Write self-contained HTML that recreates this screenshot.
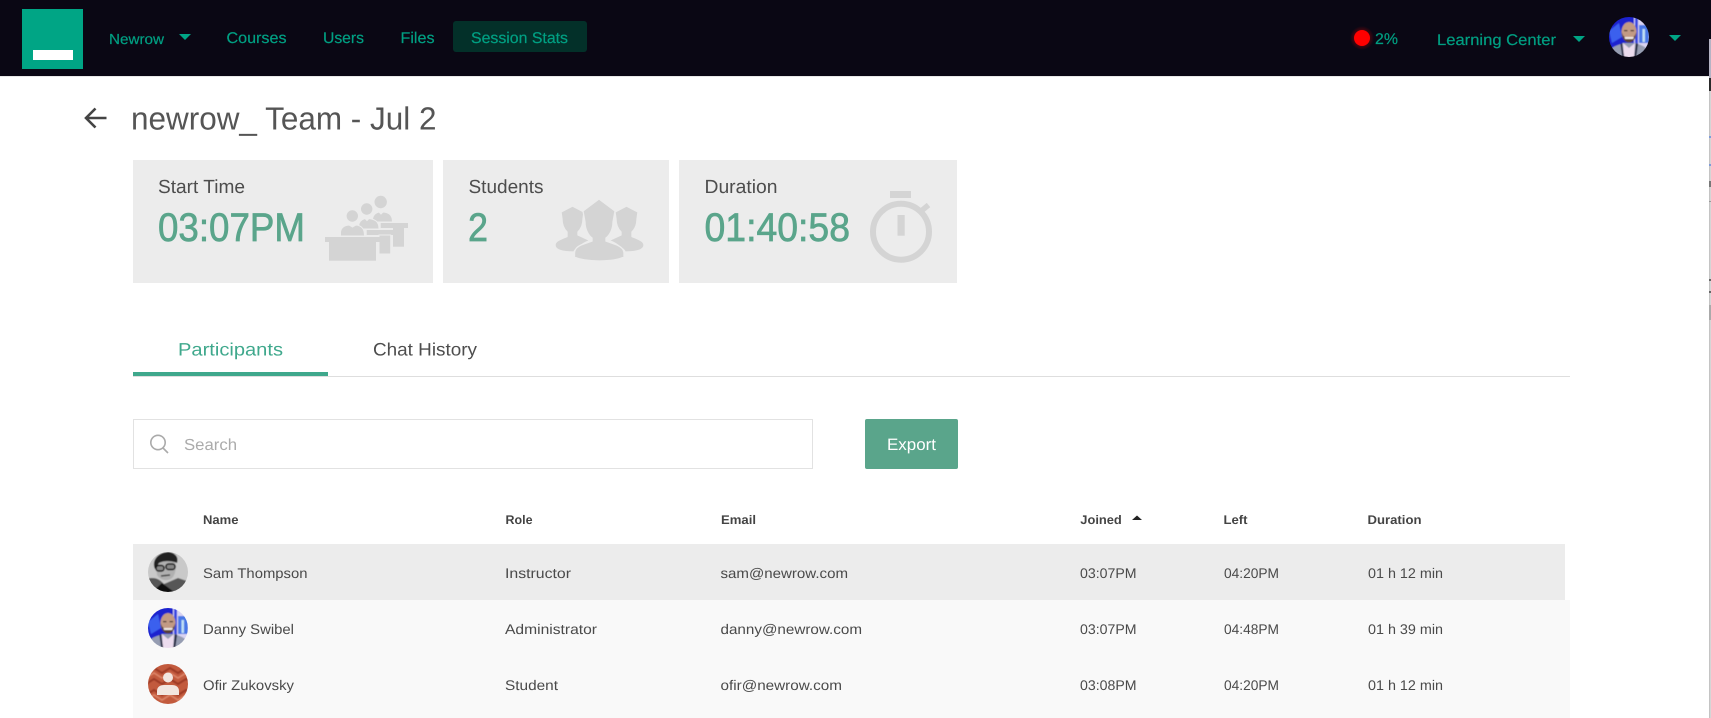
<!DOCTYPE html>
<html lang="en">
<head>
<meta charset="utf-8">
<title>newrow_ Team - Jul 2</title>
<style>
html,body{margin:0;padding:0;background:#fff;width:1711px;height:718px;overflow:hidden}
svg{display:block}
text{font-family:"Liberation Sans",Arial,sans-serif;text-rendering:geometricPrecision}
.nav{fill:#009f82;font-size:15.5px;stroke:#009f82;stroke-width:.2px}
.lite{fill:#4d4d4d}
.val{fill:#5aa58b;font-size:40px;stroke:#5aa58b;stroke-width:.7px}
.lab{fill:#4d4d4d;font-size:19px}
.th{fill:#444;font-size:12.5px;font-weight:bold}
.td{fill:#4a4a4a;font-size:14px}
.ic{fill:#d4d4d4}
</style>
</head>
<body>
<svg width="1711" height="718" viewBox="0 0 1711 718" xmlns="http://www.w3.org/2000/svg">
<defs>
<clipPath id="av"><circle cx="20" cy="20" r="20"/></clipPath>
<filter id="soft" x="-10%" y="-10%" width="120%" height="120%"><feGaussianBlur stdDeviation=".6"/></filter>
<radialGradient id="glow"><stop offset="60%" stop-color="#ff0000" stop-opacity=".28"/><stop offset="100%" stop-color="#ff0000" stop-opacity="0"/></radialGradient>
<g id="danny" clip-path="url(#av)"><g filter="url(#soft)">
<rect x="-2" y="-2" width="44" height="44" fill="#1c22cf"/>
<rect x="25" y="-2" width="17" height="44" fill="#d9d4f2"/>
<rect x="26" y="-2" width="3" height="30" fill="#3a48e0"/>
<rect x="30" y="8" width="10" height="18" fill="#4a78e6"/>
<rect x="33.500" y="12" width="2.500" height="13" fill="#bfe0f5"/>
<path d="M0 14L10 6 13 20 3 26Z" fill="#3a60ee"/>
<path d="M1 42V33C4 29 10 28 14 26H27C31 28 36 29 39 33V42Z" fill="#969db2"/>
<path d="M14 26L20 31 26 26 25 42H15Z" fill="#ecdcee"/>
<path d="M13 26L15.500 42H13.500L11.500 27Z" fill="#20253f"/>
<path d="M27 26L25 42H27L29 27Z" fill="#20253f"/>
<ellipse cx="20" cy="15" rx="7.500" ry="10" fill="#c29a84"/>
<path d="M12.800 15C13 22 16 25.500 20 25.500S27 22 27.200 15C26 20 24 20.500 20 20.500S14 20 12.800 15Z" fill="#5a4238"/>
<path d="M15.500 20L25 20 24 22H16Z" fill="#f1e9e6"/>
<rect x="15" y="13" width="3.500" height="1.200" fill="#3a2a25"/>
<rect x="21.500" y="13" width="3.500" height="1.200" fill="#3a2a25"/>
</g></g>
</defs>

<!-- nav -->
<rect width="1709" height="76" fill="#0a0714"/>
<rect x="22" y="9" width="61" height="60" fill="#00a585"/>
<rect x="33" y="50" width="40" height="10" fill="#fff"/>
<text class="nav" x="109" y="44" style="font-size:14.500px" textLength="55" lengthAdjust="spacingAndGlyphs">Newrow</text>
<path d="M179 34H191L185 40Z" fill="#00a585"/>
<text class="nav" x="226.500" y="43" textLength="60" lengthAdjust="spacingAndGlyphs">Courses</text>
<text class="nav" x="323" y="43" textLength="41" lengthAdjust="spacingAndGlyphs">Users</text>
<text class="nav" x="400.500" y="43" textLength="34" lengthAdjust="spacingAndGlyphs">Files</text>
<rect x="453" y="21" width="134" height="31" rx="3" fill="#033029"/>
<text class="nav" x="471" y="43" textLength="97" lengthAdjust="spacingAndGlyphs">Session Stats</text>
<circle cx="1362" cy="38" r="12" fill="url(#glow)"/>
<circle cx="1362" cy="38" r="8" fill="#ff0000"/>
<text class="nav" x="1375" y="44" textLength="23" lengthAdjust="spacingAndGlyphs">2%</text>
<text class="nav" x="1437" y="45" textLength="119" lengthAdjust="spacingAndGlyphs">Learning Center</text>
<path d="M1573 36H1585L1579 42Z" fill="#00a585"/>
<use href="#danny" x="1609" y="17"/>
<path d="M1669 35H1681L1675 41Z" fill="#00a585"/>
<rect y="76" width="1709" height="1" fill="#e8e8e8"/>

<!-- right edge -->
<rect x="1709" y="0" width="2" height="718" fill="#c4c4c4"/>
<rect x="1710.500" y="76" width=".5" height="642" fill="#e6e6e6"/>
<rect x="1709" y="0" width="2" height="39" fill="#0a0714"/>
<rect x="1709" y="39" width="2" height="39" fill="#b5b3c4"/>
<rect x="1709" y="78" width="2" height="13" fill="#2a2a2a"/>
<rect x="1709" y="136" width="2" height="2" fill="#7f9ad8"/>
<rect x="1709" y="164" width="2" height="2" fill="#7f9ad8"/>
<rect x="1709" y="181" width="2" height="6" fill="#777"/>
<rect x="1709" y="201" width="2" height="1" fill="#999"/>
<rect x="1709" y="279" width="2" height="2" fill="#666"/>
<rect x="1709" y="291" width="2" height="2" fill="#666"/>
<rect x="1709" y="305" width="2" height="15" fill="#aaa"/>

<!-- title -->
<path d="M106.500 118H86.500M95.500 108.500L86 118 95.500 127.500" fill="none" stroke="#444" stroke-width="2.600"/>
<text class="lite" x="131" y="129.500" style="font-size:32px;fill:#555" textLength="305.500" lengthAdjust="spacingAndGlyphs">newrow_ Team - Jul 2</text>

<!-- cards -->
<rect x="133" y="160" width="300" height="123" fill="#ececec"/>
<rect x="443" y="160" width="226" height="123" fill="#ececec"/>
<rect x="679" y="160" width="278" height="123" fill="#ececec"/>
<text class="lab" x="158" y="193" textLength="87" lengthAdjust="spacingAndGlyphs">Start Time</text>
<text class="val" x="158" y="241" textLength="147" lengthAdjust="spacingAndGlyphs">03:07PM</text>
<text class="lab" x="468.500" y="193" textLength="75" lengthAdjust="spacingAndGlyphs">Students</text>
<text class="val" x="468" y="241" textLength="20" lengthAdjust="spacingAndGlyphs">2</text>
<text class="lab" x="704.500" y="193" textLength="73" lengthAdjust="spacingAndGlyphs">Duration</text>
<text class="val" x="704.500" y="241" textLength="145.500" lengthAdjust="spacingAndGlyphs">01:40:58</text>

<!-- class icon -->
<g class="ic" stroke="#ececec" stroke-width="1">
<circle cx="380.700" cy="202" r="6.200" stroke="none"/>
<path d="M372.500 222V219C373 215 376 212.500 379 212L381 214 383 212C389 212.500 392.500 215 392.500 222Z"/>
<rect x="380.700" y="223" width="27.300" height="5" stroke="none"/>
<rect x="393" y="228" width="11" height="18.700" stroke="none"/>
<circle cx="366.700" cy="209" r="6.200"/>
<path d="M358.500 229V226C359 222 361 219.500 365 218.500L367 220.500 369 218.500C376 219.500 379 222 379 229Z"/>
<rect x="366.700" y="230" width="27.300" height="5" stroke="none"/>
<rect x="379" y="235" width="11.700" height="19"/>
<circle cx="352.300" cy="216" r="6.200"/>
<path d="M340.500 236V232C341 228 344 225.500 349 225L352.500 227 356 225C361 225.500 364.500 228 364.500 236Z"/>
<rect x="325" y="237" width="55" height="5" stroke="none"/>
<rect x="329" y="242" width="47" height="18.700" stroke="none"/>
</g>

<!-- students icon -->
<g class="ic" stroke="#ececec" stroke-width="1.300">
<path d="M561 212L572.500 206 584 212 583 219C583 225 581 229 578 232V235L590 240.500C586 242 582 244 579 247 576 249 574.500 250 574 252 565 252 555 251 555 245 555 241 561 239 567 236.500V232C564 229 562 225 562 219Z"/>
<path d="M638 212L626.500 206 615 212 616 219C616 225 618 229 621 232V235L609 240.500C613 242 617 244 620 247 623 249 624.500 250 625 252 634 252 644 251 644 245 644 241 638 239 632 236.500V232C635 229 637 225 637 219Z"/>
<path d="M583 211L599 199 615 211 613 222C613 229 610 235 606 238V241L617 245C621 247 624 249 624 254V257C619 259.500 609 261 599 261S579 259.500 574.500 257V254C574.500 249 577 247 581 245L592 241V238C588 235 585 229 585 222Z"/>
</g>

<!-- stopwatch -->
<rect x="890" y="191" width="21" height="7" fill="#d4d4d4"/>
<circle cx="901" cy="231.700" r="28" fill="none" stroke="#d4d4d4" stroke-width="6"/>
<path d="M920 212L928.500 205" stroke="#d4d4d4" stroke-width="5.500" fill="none"/>
<rect x="897.500" y="215" width="7.200" height="20.700" fill="#d4d4d4"/>

<!-- tabs -->
<text x="178" y="355.500" style="font-size:18px;fill:#3fa88c" textLength="105" lengthAdjust="spacingAndGlyphs">Participants</text>
<text class="lite" x="373" y="355.500" style="font-size:18px" textLength="104" lengthAdjust="spacingAndGlyphs">Chat History</text>
<rect x="133" y="376" width="1437" height="1" fill="#dedede"/>
<rect x="133" y="372" width="195" height="4" fill="#3fa88c"/>

<!-- search -->
<rect x="133.500" y="419.500" width="679" height="49" fill="#fff" stroke="#e2e2e2"/>
<circle cx="158" cy="442.500" r="7.200" fill="none" stroke="#aaa" stroke-width="1.600"/>
<path d="M163 448L168 453" stroke="#aaa" stroke-width="1.600" fill="none"/>
<text x="184" y="450" style="font-size:16px;fill:#ababab" textLength="53" lengthAdjust="spacingAndGlyphs">Search</text>
<rect x="865" y="419" width="93" height="50" rx="2" fill="#5aa58b"/>
<text x="887" y="450" style="font-size:16.500px;fill:#fff" textLength="49" lengthAdjust="spacingAndGlyphs">Export</text>

<!-- table header -->
<text class="th" x="203" y="524" textLength="35.500" lengthAdjust="spacingAndGlyphs">Name</text>
<text class="th" x="505.500" y="524" textLength="27" lengthAdjust="spacingAndGlyphs">Role</text>
<text class="th" x="721" y="524" textLength="35" lengthAdjust="spacingAndGlyphs">Email</text>
<text class="th" x="1080.300" y="524" textLength="41.500" lengthAdjust="spacingAndGlyphs">Joined</text>
<path d="M1132 520H1142L1137 515.500Z" fill="#222"/>
<text class="th" x="1223.500" y="524" textLength="24" lengthAdjust="spacingAndGlyphs">Left</text>
<text class="th" x="1367.500" y="524" textLength="54" lengthAdjust="spacingAndGlyphs">Duration</text>

<!-- rows -->
<rect x="133" y="600" width="1437" height="118" fill="#f9f9f9"/>
<rect x="133" y="544" width="1432" height="56" fill="#ececec"/>

<!-- Sam avatar -->
<g transform="translate(148 552)">
<g clip-path="url(#av)"><g filter="url(#soft)">
<rect x="-2" y="-2" width="44" height="44" fill="#c9c9c9"/>
<path d="M-2 42V27C8 24 12 28 16 32L30 26 42 30V42Z" fill="#565656"/>
<path d="M2 42L14 31 29 42Z" fill="#111"/>
<path d="M8 10L26 7C29 13 28 22 24 26 19 30 12 28 9 23Z" fill="#b0b0b0"/>
<path d="M7 17C3 8 11 0 21 0 27 1 31 5 29 11 23 8 14 9 11 11Z" fill="#222"/>
<rect x="8" y="13.500" width="8" height="5.500" rx="2.500" fill="#888" stroke="#111" stroke-width="1.500"/>
<rect x="18" y="12" width="9" height="5.500" rx="2.500" fill="#888" stroke="#111" stroke-width="1.500"/>
<path d="M13 24L22 23" stroke="#444" stroke-width="1.500"/>
</g></g>
</g>
<!-- Danny avatar -->
<use href="#danny" x="148" y="608"/>
<!-- Ofir avatar -->
<g transform="translate(148 664)">
<g clip-path="url(#av)">
<g filter="url(#soft)">
<rect x="-2" y="-2" width="44" height="44" fill="#c25a3e"/>
<path d="M-2 9L6 4 14 9 22 4 30 9 38 4 46 9M-2 20L6 15 14 20 22 15 30 20 38 15 46 20M-2 31L6 26 14 31 22 26 30 31 38 26 46 31" fill="none" stroke="#9e3b26" stroke-width="2.200"/>
<path d="M-2 14L6 9 14 14 22 9 30 14 38 9 46 14M-2 36L6 31 14 36 22 31 30 36 38 31 46 36" fill="none" stroke="#dc8468" stroke-width="1.600"/>
</g>
<circle cx="20" cy="13.500" r="5" fill="#f2e6e0"/>
<path d="M9 31V27C9 23 12 21 16 21H24C28 21 31 23 31 27V31Z" fill="#f2e6e0"/>
</g>
</g>

<text class="td" x="203" y="578" textLength="104.500" lengthAdjust="spacingAndGlyphs">Sam Thompson</text>
<text class="td" x="505" y="578" textLength="66" lengthAdjust="spacingAndGlyphs">Instructor</text>
<text class="td" x="720.500" y="578" textLength="127.500" lengthAdjust="spacingAndGlyphs">sam@newrow.com</text>
<text class="td" x="1080" y="578" textLength="56.500" lengthAdjust="spacingAndGlyphs">03:07PM</text>
<text class="td" x="1224" y="578" textLength="55" lengthAdjust="spacingAndGlyphs">04:20PM</text>
<text class="td" x="1368" y="578" textLength="75" lengthAdjust="spacingAndGlyphs">01 h 12 min</text>

<text class="td" x="203" y="634" textLength="91" lengthAdjust="spacingAndGlyphs">Danny Swibel</text>
<text class="td" x="505" y="634" textLength="92" lengthAdjust="spacingAndGlyphs">Administrator</text>
<text class="td" x="720.500" y="634" textLength="141.500" lengthAdjust="spacingAndGlyphs">danny@newrow.com</text>
<text class="td" x="1080" y="634" textLength="56.500" lengthAdjust="spacingAndGlyphs">03:07PM</text>
<text class="td" x="1224" y="634" textLength="55" lengthAdjust="spacingAndGlyphs">04:48PM</text>
<text class="td" x="1368" y="634" textLength="75" lengthAdjust="spacingAndGlyphs">01 h 39 min</text>

<text class="td" x="203" y="690" textLength="91" lengthAdjust="spacingAndGlyphs">Ofir Zukovsky</text>
<text class="td" x="505" y="690" textLength="53" lengthAdjust="spacingAndGlyphs">Student</text>
<text class="td" x="720.500" y="690" textLength="121.500" lengthAdjust="spacingAndGlyphs">ofir@newrow.com</text>
<text class="td" x="1080" y="690" textLength="56.500" lengthAdjust="spacingAndGlyphs">03:08PM</text>
<text class="td" x="1224" y="690" textLength="55" lengthAdjust="spacingAndGlyphs">04:20PM</text>
<text class="td" x="1368" y="690" textLength="75" lengthAdjust="spacingAndGlyphs">01 h 12 min</text>
</svg>
</body>
</html>
